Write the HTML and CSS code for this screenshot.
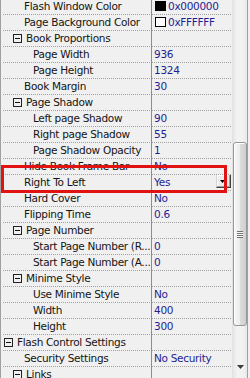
FILE: index.html
```html
<!DOCTYPE html>
<html lang="en">
  <head>
    <meta charset="utf-8">
    <title>Book properties</title>
    <link rel="stylesheet" href="styles.css">
  </head>
  <body>
    <div class="inspector">
      <div class="rows">
        <div class="row"><div class="name d1">Flash Window Color</div><div class="val"><span class="swatch black"></span>0x000000</div></div>
        <div class="row"><div class="name d1">Page Background Color</div><div class="val"><span class="swatch white"></span>0xFFFFFF</div></div>
        <div class="row"><div class="name c1"><span class="toggle"></span>Book Proportions</div><div class="val"></div></div>
        <div class="row"><div class="name d2">Page Width</div><div class="val">936</div></div>
        <div class="row"><div class="name d2">Page Height</div><div class="val">1324</div></div>
        <div class="row"><div class="name d1">Book Margin</div><div class="val">30</div></div>
        <div class="row"><div class="name c1"><span class="toggle"></span>Page Shadow</div><div class="val"></div></div>
        <div class="row"><div class="name d2">Left page Shadow</div><div class="val">90</div></div>
        <div class="row"><div class="name d2">Right page Shadow</div><div class="val">55</div></div>
        <div class="row"><div class="name d2">Page Shadow Opacity</div><div class="val">1</div></div>
        <div class="row"><div class="name d1">Hide Book Frame Bar</div><div class="val">No</div></div>
        <div class="row selected"><div class="name d1">Right To Left</div><div class="val">Yes<span class="drop"><svg width="5" height="3" viewBox="0 0 5 3"><polygon points="0,0 5,0 2.5,3" fill="#000"/></svg></span></div></div>
        <div class="row"><div class="name d1">Hard Cover</div><div class="val">No</div></div>
        <div class="row"><div class="name d1">Flipping Time</div><div class="val">0.6</div></div>
        <div class="row"><div class="name c1"><span class="toggle"></span>Page Number</div><div class="val"></div></div>
        <div class="row"><div class="name d2" title="Start Page Number (Right To Left)">Start Page Number (R...</div><div class="val">0</div></div>
        <div class="row"><div class="name d2" title="Start Page Number (Arabic)">Start Page Number (A...</div><div class="val">0</div></div>
        <div class="row"><div class="name c1"><span class="toggle"></span>Minime Style</div><div class="val"></div></div>
        <div class="row"><div class="name d2">Use Minime Style</div><div class="val">No</div></div>
        <div class="row"><div class="name d2">Width</div><div class="val">400</div></div>
        <div class="row"><div class="name d2">Height</div><div class="val">300</div></div>
        <div class="row"><div class="name c0"><span class="toggle"></span>Flash Control Settings</div><div class="val"></div></div>
        <div class="row"><div class="name d1">Security Settings</div><div class="val">No Security</div></div>
        <div class="row"><div class="name c1"><span class="toggle"></span>Links</div><div class="val"></div></div>
      </div>

      <div class="vscroll">
        <div class="thumb"><span class="grip"></span></div>
        <svg class="arrow" width="7" height="4" viewBox="0 0 7 4"><polygon points="0,0 7,0 3.5,4" fill="#3c3c3c"/></svg>
      </div>

      <!-- highlight around the edited row -->
      <div class="mark"></div>
    </div>
  </body>
</html>
```

FILE: styles.css
```css
body
{
	margin: 0;
	font-family: "DejaVu Sans", Verdana, sans-serif;
	font-size: 10.5px;
	letter-spacing: -0.3px;
}
.inspector
{
	position: relative;
	display: flex;
	width: 250px;
	height: 378px;
	box-sizing: border-box;
	overflow: hidden;
	background: #f0f0f0;
	border-left: 1px solid #a0a0a0;
	padding-right: 1px;
}
.rows
{
	flex: 0 0 229px;
	padding-left: 2px;
	margin-top: -1px;
}
.row
{
	display: flex;
	height: 16px;
	line-height: 15px;
}
.name, .val
{
	box-sizing: border-box;
	white-space: nowrap;
	overflow: hidden;
	background: linear-gradient(to right, #a0a0a0 50%, transparent 50%) left bottom / 2px 1px repeat-x;
}
.name
{
	flex: 0 0 148px;
	color: #141414;
}
.name.d1 { padding-left: 21px; }
.name.d2 { padding-left: 30px; }
.name.c0 { padding-left: 1px; }
.name.c1 { padding-left: 10px; }
.toggle
{
	display: inline-block;
	position: relative;
	width: 9px;
	height: 9px;
	box-sizing: border-box;
	border: 1px solid #222;
	vertical-align: -1px;
	margin-right: 4px;
}
.toggle:after
{
	content: "";
	position: absolute;
	left: 1px;
	top: 3px;
	width: 5px;
	height: 1px;
	background: #111;
}
.val
{
	flex: 1;
	display: flex;
	align-items: flex-start;
	border-left: 1px solid #8c8c8c;
	padding-left: 2px;
	color: #1e1e94;
}
.swatch
{
	flex: none;
	width: 11px;
	height: 10px;
	box-sizing: border-box;
	margin: 2px 2px 0 1px;
	border: 1px solid #000;
}
.swatch.black { background: #000; }
.swatch.white { background: #fff; }
.drop
{
	display: flex;
	align-items: center;
	justify-content: center;
	margin: -1px 1px 0 auto;
	width: 15px;
	height: 14px;
	box-sizing: border-box;
	background: #ececec;
	border: 1px solid;
	border-color: #d4d4d4 #404040 #404040 #d4d4d4;
	box-shadow: inset -1px -1px 0 #a0a0a0, inset 1px 1px 0 #fff;
	padding-right: 3px;
}
.drop svg
{
	display: block;
}
.vscroll
{
	position: relative;
	flex: 0 0 16px;
	box-sizing: border-box;
	border-left: 1px solid #e2e2e2;
	border-right: 1px solid #a0a0a0;
	background: linear-gradient(to right, #e6e6e6, #f2f2f2 30%, #f2f2f2 70%, #e9e9e9);
}
.thumb
{
	position: absolute;
	left: 0;
	top: 142px;
	width: 14px;
	height: 184px;
	box-sizing: border-box;
	border: 1px solid #979797;
	border-radius: 3px;
	background: linear-gradient(to right, #f7f7f7, #ececec 50%, #dcdcdc 50%, #cfcfcf);
	box-shadow: inset 1px 1px 0 #fff;
}
.grip
{
	position: absolute;
	left: 3px;
	top: 88px;
	width: 6px;
	height: 7px;
	background: repeating-linear-gradient(to bottom, #707070 0 1px, #fafafa 1px 2px);
}
.arrow
{
	position: absolute;
	left: 4px;
	top: 365px;
}
.mark
{
	position: absolute;
	left: 0;
	top: 165px;
	width: 226px;
	height: 28px;
	box-sizing: border-box;
	border: 3px solid #e01212;
}
```
